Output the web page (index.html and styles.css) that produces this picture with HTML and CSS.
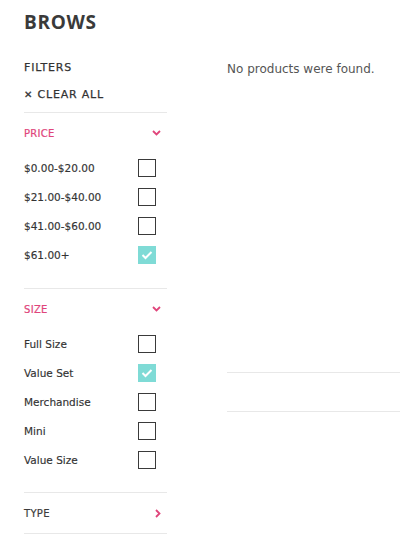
FILE: index.html
```html
<!DOCTYPE html>
<html lang="en">
<head>
    <meta charset="UTF-8">
    <meta name="viewport" content="width=device-width, initial-scale=1.0">
    <title>Brows</title>
    <link rel="stylesheet" href="styles.css">
</head>
<body>
    <h1 class="page-title">BROWS</h1>
    <div class="layout">
        <aside class="filters">
            <div class="filters-title">FILTERS</div>
            <a class="clear-all" href="#"><span class="clear-x">&#x2715;</span> CLEAR ALL</a>

            <section class="filter-group price">
                <div class="group-header open">
                    <span>PRICE</span>
                    <svg class="chevron" width="9" height="6" viewBox="0 0 9 6"><path d="M1 1l3.5 3.5L8 1" fill="none" stroke="currentColor" stroke-width="1.8"/></svg>
                </div>
                <ul class="options">
                    <li><span>$0.00-$20.00</span><span class="box"></span></li>
                    <li><span>$21.00-$40.00</span><span class="box"></span></li>
                    <li><span>$41.00-$60.00</span><span class="box"></span></li>
                    <li><span>$61.00+</span><span class="box checked"><svg width="12" height="10" viewBox="0 0 12 10"><path d="M1.5 5l3 3 6-6" fill="none" stroke="#fff" stroke-width="2"/></svg></span></li>
                </ul>
            </section>

            <section class="filter-group">
                <div class="group-header open">
                    <span>SIZE</span>
                    <svg class="chevron" width="9" height="6" viewBox="0 0 9 6"><path d="M1 1l3.5 3.5L8 1" fill="none" stroke="currentColor" stroke-width="1.8"/></svg>
                </div>
                <ul class="options">
                    <li><span>Full Size</span><span class="box"></span></li>
                    <li><span>Value Set</span><span class="box checked"><svg width="12" height="10" viewBox="0 0 12 10"><path d="M1.5 5l3 3 6-6" fill="none" stroke="#fff" stroke-width="2"/></svg></span></li>
                    <li><span>Merchandise</span><span class="box"></span></li>
                    <li><span>Mini</span><span class="box"></span></li>
                    <li><span>Value Size</span><span class="box"></span></li>
                </ul>
            </section>

            <section class="filter-group last">
                <div class="group-header">
                    <span>TYPE</span>
                    <svg class="chevron" width="6" height="9" viewBox="0 0 6 9"><path d="M1 1l3.5 3.5L1 8" fill="none" stroke="currentColor" stroke-width="1.8"/></svg>
                </div>
            </section>
        </aside>

        <main class="results">
            <p class="empty">No products were found.</p>
            <div class="pager"></div>
        </main>
    </div>
</body>
</html>
```

FILE: styles.css
```css
body {
    font-family: "DejaVu Sans", Verdana, sans-serif;
    color: #3c3c3c;
    margin: 0;
    padding: 12px 0 0 24px;
    background: #fff;
    overflow: hidden;
}
.page-title {
    font-family: "Open Sans", "DejaVu Sans", sans-serif;
    font-size: 19px;
    font-weight: 700;
    letter-spacing: 0.7px;
    margin: 0;
    line-height: 20px;
    color: #3a3a3a;
}
.layout {
    display: flex;
    gap: 60px;
    margin-top: 29px;
}
.filters {
    width: 143px;
    flex-shrink: 0;
}
.filters-title {
    font-size: 11px;
    letter-spacing: 0.8px;
    line-height: 14px;
    color: #333;
    -webkit-text-stroke: 0.25px #333;
}
.clear-all {
    display: block;
    margin-top: 13px;
    font-size: 11px;
    letter-spacing: 0.8px;
    line-height: 14px;
    color: #333;
    text-decoration: none;
    padding-bottom: 10px;
    -webkit-text-stroke: 0.25px #333;
}
.clear-x {
    font-size: 10px;
    font-weight: bold;
}
.filter-group {
    border-top: 1px solid #e8e8e8;
    padding-bottom: 18px;
}
.filter-group.price {
    padding-bottom: 19px;
}
.filter-group.last {
    border-bottom: 1px solid #e8e8e8;
    padding-bottom: 0;
}
.group-header {
    height: 40px;
    display: flex;
    align-items: center;
    justify-content: space-between;
    font-size: 10px;
    letter-spacing: 0.3px;
    padding-right: 6px;
    color: #3c3c3c;
    -webkit-text-stroke: 0.2px currentColor;
}
.group-header.open {
    color: #e0457b;
}
.chevron {
    color: #e0457b;
}
.options {
    list-style: none;
    margin: 0;
    padding: 0 11px 0 0;
}
.options li {
    height: 29px;
    display: flex;
    align-items: center;
    justify-content: space-between;
    font-size: 10.5px;
    color: #333;
    -webkit-text-stroke: 0.15px #333;
}
.box {
    width: 18px;
    height: 18px;
    box-sizing: border-box;
    border: 1px solid #3a3a3a;
    display: flex;
    align-items: center;
    justify-content: center;
}
.box.checked {
    background: #7fdbd6;
    border-color: #7fdbd6;
}
.results {
    flex: 1;
}
.empty {
    margin: 1px 0 0;
    font-size: 12px;
    line-height: 14px;
    color: #555;
}
.pager {
    margin-top: 296px;
    height: 38px;
    border-top: 1px solid #e8e8e8;
    border-bottom: 1px solid #e8e8e8;
}
```
